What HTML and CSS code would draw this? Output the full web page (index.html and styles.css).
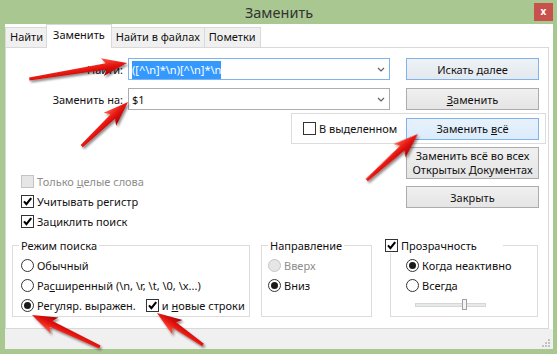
FILE: index.html
```html
<!DOCTYPE html>
<html lang="ru">
<head>
    <meta charset="UTF-8">
    <meta name="viewport" content="width=device-width, initial-scale=1.0">
    <title>Заменить</title>
    <link rel="stylesheet" href="styles.css">
</head>
<body>
<div class="window">
    <div class="titlebar">
        <span></span>
        <span class="title">Заменить</span>
        <span class="close">x</span>
    </div>
    <div class="client">
        <div class="tabs">
            <div class="tab">Найти</div>
            <div class="tab active">Заменить</div>
            <div class="tab">Найти в файлах</div>
            <div class="tab">Пометки</div>
        </div>
        <div class="page">
            <div class="field-row">
                <label class="field-label">Найти:</label>
                <div class="combo focused">
                    <span class="value"><span class="sel">([^\n]*\n)[^\n]*\n</span></span>
                    <svg class="chevron" width="8" height="5" viewBox="0 0 8 5"><path d="M1 1l3 3 3-3"/></svg>
                </div>
                <button class="btn default">Искать далее</button>
            </div>
            <div class="field-row">
                <label class="field-label">Заменить на:</label>
                <div class="combo">
                    <span class="value">$1</span>
                    <svg class="chevron" width="8" height="5" viewBox="0 0 8 5"><path d="M1 1l3 3 3-3"/></svg>
                </div>
                <button class="btn"><u>З</u>аменить</button>
            </div>
            <div class="sel-box">
                <div class="check"><span class="box"></span><span>В выделенном</span></div>
                <button class="btn hover">Заменить <u>в</u>сё</button>
            </div>
            <div class="middle">
                <div class="options">
                    <div class="check disabled"><span class="box"></span><span>Только <u>ц</u>елые слова</span></div>
                    <div class="check"><span class="box"><svg viewBox="0 0 11 11"><path d="M2 5.4l2.4 2.8 4.8-6"/></svg></span><span>Учитывать регистр</span></div>
                    <div class="check"><span class="box"><svg viewBox="0 0 11 11"><path d="M2 5.4l2.4 2.8 4.8-6"/></svg></span><span>Зациклить поиск</span></div>
                </div>
                <div class="side-buttons">
                    <button class="btn tall">Заменить всё во всех<br>Открытых Документах</button>
                    <button class="btn">Закрыть</button>
                </div>
            </div>
            <div class="groups">
                <fieldset class="group mode">
                    <legend>Режим поиска</legend>
                    <div class="radio"><span class="dot"></span><span>Обычный</span></div>
                    <div class="radio"><span class="dot"></span><span>Ра<u>с</u>ширенный (\n, \r, \t, \0, \x...)</span></div>
                    <div class="radio"><span class="dot on"></span><span>Регуляр. выражен.</span>
                        <span class="check inline"><span class="box"><svg viewBox="0 0 11 11"><path d="M2 5.4l2.4 2.8 4.8-6"/></svg></span><span>и <u>н</u>овые строки</span></span>
                    </div>
                </fieldset>
                <fieldset class="group direction">
                    <legend>Направление</legend>
                    <div class="radio disabled"><span class="dot"></span><span>Вверх</span></div>
                    <div class="radio"><span class="dot on"></span><span>Вниз</span></div>
                </fieldset>
                <fieldset class="group transparency">
                    <legend class="check"><span class="box"><svg viewBox="0 0 11 11"><path d="M2 5.4l2.4 2.8 4.8-6"/></svg></span><span>Прозрачность</span></legend>
                    <div class="radio"><span class="dot on"></span><span>Когда неактивно</span></div>
                    <div class="radio"><span class="dot"></span><span>Всегда</span></div>
                    <div class="slider">
                        <svg width="72" height="12" viewBox="0 0 72 12">
                            <rect x="0.5" y="4.5" width="70" height="3" fill="#e7eaea" stroke="#d6d6d6"/>
                            <rect x="47.5" y="0.5" width="4" height="10" fill="#f4f4f4" stroke="#a0a0a0"/>
                        </svg>
                    </div>
                </fieldset>
            </div>
        </div>
        <div class="statusbar">
            <svg class="grip" width="10" height="10" viewBox="0 0 10 10">
                <rect x="7" y="1" width="2" height="2"/>
                <rect x="4" y="4" width="2" height="2"/><rect x="7" y="4" width="2" height="2"/>
                <rect x="1" y="7" width="2" height="2"/><rect x="4" y="7" width="2" height="2"/><rect x="7" y="7" width="2" height="2"/>
            </svg>
        </div>
    </div>

    <!-- red annotation arrows drawn over the dialog -->
    <svg class="arrows" width="557" height="354" viewBox="0 0 557 354">
        <defs>
            <linearGradient id="red" gradientUnits="userSpaceOnUse" x1="0" y1="-9" x2="0" y2="9">
                <stop offset="0" stop-color="#ff5a48"/>
                <stop offset="0.5" stop-color="#e5140f"/>
                <stop offset="1" stop-color="#a50000"/>
            </linearGradient>
            <filter id="shadow" x="-30%" y="-60%" width="160%" height="220%">
                <feDropShadow dx="1.5" dy="2" stdDeviation="1.2" flood-color="#000" flood-opacity="0.45"/>
            </filter>
        </defs>
        <g filter="url(#shadow)" fill="url(#red)">
            <polygon transform="translate(127 63) rotate(-9.3)" points="0,0 -25,-9 -21,-3.2 -99,-1.6 -99,1.6 -21,3.2 -25,9"/>
            <polygon transform="translate(128 102) rotate(-43.7)" points="0,0 -25,-9 -21,-3.2 -64,-1.6 -64,1.6 -21,3.2 -25,9"/>
            <polygon transform="translate(418 134) rotate(-42)" points="0,0 -25,-9 -21,-3.2 -69,-1.6 -69,1.6 -21,3.2 -25,9"/>
            <polygon transform="translate(32 315) rotate(-154.8)" points="0,0 -25,-9 -21,-3.2 -75,-1.6 -75,1.6 -21,3.2 -25,9"/>
            <polygon transform="translate(157 313) rotate(-145.2)" points="0,0 -25,-9 -21,-3.2 -56,-1.6 -56,1.6 -21,3.2 -25,9"/>
        </g>
    </svg>
</div>
</body>
</html>
```

FILE: styles.css
```css
* {
    box-sizing: border-box;
}
body {
    margin: 0;
    background: #a9c790;
    font-family: "Noto Sans", "DejaVu Sans", sans-serif;
    font-size: 11px;
    color: #111;
}
.window {
    position: relative;
    width: 557px;
    height: 354px;
    background: #a9c790;
    padding: 0 4px 5px 5px;
    display: flex;
    flex-direction: column;
}
.titlebar {
    height: 24px;
    display: grid;
    grid-template-columns: 1fr auto 1fr;
    align-items: center;
}
.title {
    font-size: 14.5px;
    color: #333;
}
.close {
    justify-self: end;
    align-self: start;
    margin-top: 3px;
    width: 19px;
    height: 18px;
    background: #c9514c;
    color: #fff;
    font-size: 10px;
    font-weight: bold;
    line-height: 16px;
    text-align: center;
}
.client {
    flex: 1;
    background: #fff;
    display: flex;
    flex-direction: column;
    padding-right: 4px;
}

/* tabs */
.tabs {
    display: flex;
    align-items: flex-end;
    height: 24px;
    position: relative;
    z-index: 1;
}
.tab {
    height: 20px;
    margin: 0 -1px 1px 0;
    padding: 0 4px;
    line-height: 18px;
    border: 1px solid #d9d9d9;
    border-bottom: none;
    background: #f0f0f0;
}
.tab.active {
    height: 24px;
    margin: 0 -1px 0 -1px;
    padding: 0 6px;
    line-height: 20px;
    background: #fff;
    position: relative;
}
.page {
    height: 282px;
    margin-top: -1px;
    border: 1px solid #d9d9d9;
    background: #fff;
}
.statusbar {
    flex: 1;
    margin-right: -4px;
    background: #f0f0f0;
    display: flex;
    justify-content: flex-end;
    align-items: flex-end;
    padding: 0 2px 1px 0;
}
.grip {
    fill: #c2c2c2;
}

/* find / replace fields */
.field-row {
    display: flex;
    align-items: center;
    height: 22px;
    margin-top: 10px;
}
.field-row + .field-row {
    margin-top: 8px;
}
.field-label {
    width: 117px;
    text-align: right;
}
.combo {
    width: 262px;
    height: 22px;
    margin-left: 5px;
    border: 1px solid #abadb3;
    display: flex;
    align-items: center;
    padding: 0 4px 0 2px;
}
.combo.focused {
    border-color: #7eb4ea;
}
.combo .value {
    flex: 1;
    padding-left: 1px;
}
.sel {
    background: #3399ff;
    color: #fff;
    padding: 1px 0 2px;
}
.chevron {
    fill: none;
    stroke: #606060;
    stroke-width: 1.2;
}

/* buttons */
.btn {
    width: 133px;
    height: 22px;
    padding: 0;
    font: inherit;
    color: #111;
    border: 1px solid #acacac;
    background: linear-gradient(#f0f0f0, #e5e5e5);
}
.field-row .btn {
    margin-left: 16px;
}
.btn.default {
    border-color: #7eb4ea;
    background: linear-gradient(#eef2f6, #e3e9ef);
}
.btn.hover {
    border-color: #7eb4ea;
    background: linear-gradient(#e7f1fb, #dcecfc);
}
.btn.tall {
    height: 32px;
    line-height: 14px;
}

.sel-box {
    margin: 3px 0 0 285px;
    width: 255px;
    height: 31px;
    border: 1px solid #dcdcdc;
    display: flex;
    align-items: center;
    justify-content: space-between;
    padding: 0 6px 0 11px;
}
.middle {
    display: flex;
    margin-top: 3px;
}
.options {
    padding: 24px 0 0 15px;
}
.options .check {
    height: 20px;
}
.side-buttons {
    margin-left: auto;
    margin-right: 9px;
    display: flex;
    flex-direction: column;
    gap: 7px;
}

/* checkboxes and radios */
.check, .radio {
    display: flex;
    align-items: center;
    gap: 3px;
}
.check.inline {
    display: inline-flex;
    margin-left: 7px;
}
.box {
    width: 13px;
    height: 13px;
    border: 1px solid #333;
    background: #fff;
    display: inline-flex;
    flex: none;
}
.box svg {
    width: 11px;
    height: 11px;
    fill: none;
    stroke: #000;
    stroke-width: 2.1;
}
.check.disabled {
    color: #8d8d8d;
}
.check.disabled .box {
    border-color: #c4c4c4;
    background: #e6e6e6;
}
.dot {
    width: 13px;
    height: 13px;
    border-radius: 50%;
    border: 1px solid #333;
    background: #fff;
    display: inline-flex;
    align-items: center;
    justify-content: center;
    flex: none;
}
.dot.on::after {
    content: "";
    width: 7px;
    height: 7px;
    border-radius: 50%;
    background: #1a1a1a;
}
.radio {
    height: 20px;
    white-space: nowrap;
}
.radio.disabled {
    color: #8d8d8d;
}
.radio.disabled .dot {
    border-color: #c4c4c4;
    background: #e6e6e6;
}

/* group boxes */
.groups {
    display: flex;
    margin-top: 7px;
    padding-left: 6px;
}
.group {
    margin: 0;
    height: 79px;
    min-width: 0;
    border: 1px solid #dcdcdc;
    padding: 2px 8px 0;
}
.group legend {
    padding: 0 2px;
    margin-left: -2px;
    line-height: 15px;
}
.mode {
    width: 238px;
}
.direction {
    width: 111px;
    margin-left: 11px;
    padding-left: 6px;
}
.direction legend {
    margin-left: 0;
}
.transparency {
    width: 148px;
    margin-left: 18px;
    padding-left: 15px;
}
.transparency legend {
    margin-left: -21px;
    width: 118px;
    padding: 0;
}
.slider {
    height: 20px;
    display: flex;
    align-items: center;
    padding-left: 9px;
}

.arrows {
    position: absolute;
    left: 0;
    top: 0;
    pointer-events: none;
}
```
